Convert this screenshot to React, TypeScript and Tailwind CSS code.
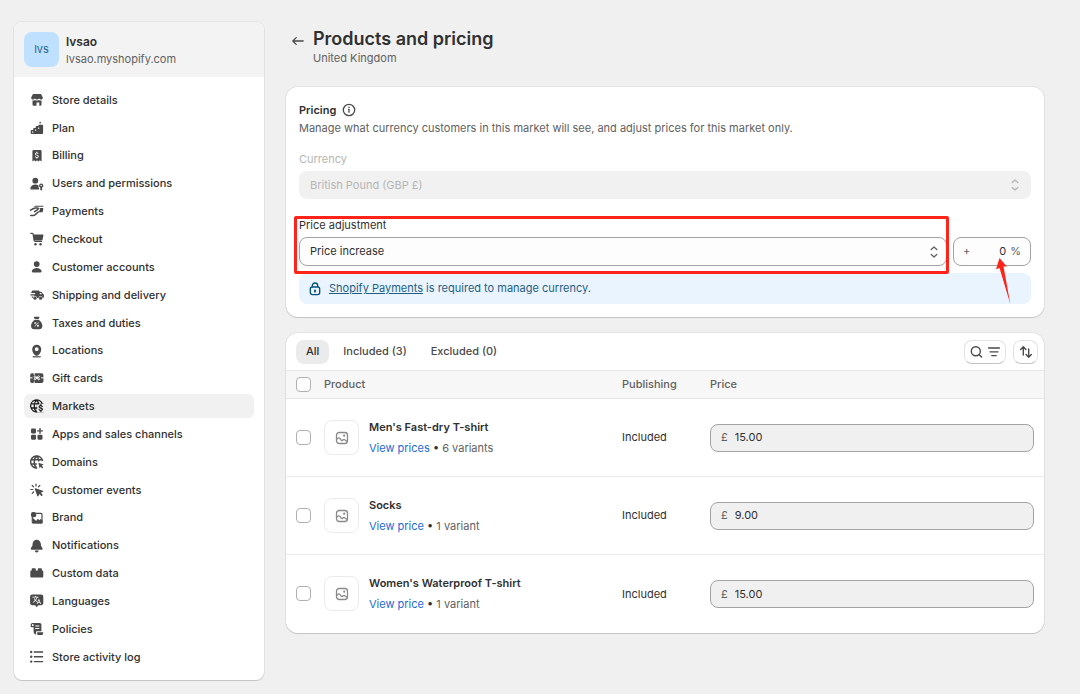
import { useState, type ReactNode } from "react";
import clsx from "clsx";
import { MdAttachMoney, MdPercent, MdTranslate } from "react-icons/md";

interface NavItem {
  label: string;
  icon: ReactNode;
}

interface Product {
  name: string;
  link: string;
  variants: string;
  price: string;
}

function Glyph({ children, className }: { children: ReactNode; className?: string }) {
  return (
    <svg
      viewBox="0 0 14 14"
      fill="currentColor"
      aria-hidden="true"
      className={clsx("size-3.5 shrink-0", className)}
    >
      {children}
    </svg>
  );
}

const navItems: NavItem[] = [
  {
    label: "Store details",
    icon: (
      <Glyph>
        <path d="M3 1h8l1.8 3.4c.1 1.3-.7 2.1-1.7 2.1-.9 0-1.5-.4-2-1-.5.6-1.2 1-2.1 1s-1.6-.4-2.1-1c-.5.6-1.1 1-2 1-1 0-1.8-.8-1.7-2.1z" />
        <path d="M2.5 7.6c1 .1 1.8-.1 2.5-.6.6.4 1.2.6 2 .6s1.4-.2 2-.6c.7.5 1.500.7 2.500.6v3.900a1.300 1.300 0 0 1-1.300 1.300H9.300V9.500H6.500v3.300H3.800a1.300 1.300 0 0 1-1.300-1.300z" />
      </Glyph>
    ),
  },
  {
    label: "Plan",
    icon: (
      <Glyph>
        <path d="M9.3 3.8h2.900a.9.9 0 0 1 .9.9v7.400a.9.9 0 0 1-.9.9H1.600a.9.9 0 0 1-.9-.9V9.800a.9.9 0 0 1 .9-.9h1.600V7.800a.9.9 0 0 1 .9-.9h1.600V6a.9.9 0 0 1 .9-.9h1.800v-.4a.9.9 0 0 1 .9-.9z" />
        <path d="M9.800.4l.6.7.9.1-.6.7-.2.9-.7-.5-.7-.1.4-.8z" />
        <path d="M2 10.400h1.200v1.400H2zM5 8.400h1.100v1.300H5zM8.200 6.600h1v1.300h-1z" fill="#fff" />
      </Glyph>
    ),
  },
  {
    label: "Billing",
    icon: (
      <Glyph>
        <path d="M3.800 1h6.400a1.400 1.400 0 0 1 1.400 1.400v10.200l-1.800-1.300-1.400 1.300L7 11.300l-1.400 1.300-1.400-1.300-1.800 1.300V2.400A1.400 1.400 0 0 1 3.800 1z" />
        <MdAttachMoney x="2.500" y="1.700" size={9} color="#fff" />
      </Glyph>
    ),
  },
  {
    label: "Users and permissions",
    icon: (
      <Glyph>
        <circle cx="5.3" cy="3.7" r="2.9" />
        <path d="M5.300 7.600c1.400 0 2.500.4 3.300 1-.3 1.200-.1 2.200.5 3v1H1.500C.5 12.600 0 11.600.5 10.700 1.400 8.800 3.100 7.600 5.300 7.600z" />
        <path
          fillRule="evenodd"
          d="M11.200 6.400a2.200 2.200 0 0 1 .9 4.200v2.200l-.9.9-.9-.9v-2.200a2.200 2.200 0 0 1 .9-4.200zm0 1.300a.8.8 0 1 0 0 1.600.8.8 0 0 0 0-1.600z"
        />
      </Glyph>
    ),
  },
  {
    label: "Payments",
    icon: (
      <Glyph>
        <path d="M5.500 1.800h7.200c.5 0 .8.4.7.9H3.900c.4-.5 1-.9 1.600-.9zM9 4.100h4.300l-.3 2.800c-.1.800-.7 1.300-1.500 1.300H7.600l1.700-1.400c1.100-.9.9-2-.3-2.700z" />
        <path
          d="M.6 6.200l3-1.700c.6-.3 1.100-.4 1.800-.4h2c1 0 1.100 1 .3 1.500L4.600 7.700M.7 11.400h2.600c.6 0 1.100-.2 1.600-.6L8 8.200"
          fill="none"
          stroke="currentColor"
          strokeWidth="1.5"
          strokeLinecap="round"
        />
      </Glyph>
    ),
  },
  {
    label: "Checkout",
    icon: (
      <Glyph>
        <path
          d="M.8 1.300h1.400c.5 0 .8.3.9.8l1 6.400c.1.6.5.9 1.100.9h6.200"
          fill="none"
          stroke="currentColor"
          strokeWidth="1.2"
          strokeLinecap="round"
        />
        <path d="M3.200 2.500h9.400c.6 0 .9.4.8.9l-.8 4.100c-.1.6-.5.9-1.100.9H4.100z" />
        <circle cx="5.5" cy="12.200" r="1.2" />
        <circle cx="10.5" cy="12.200" r="1.2" />
      </Glyph>
    ),
  },
  {
    label: "Customer accounts",
    icon: (
      <Glyph>
        <circle cx="6.7" cy="4.1" r="2.9" />
        <path d="M6.700 8c2.200 0 3.900 1 4.700 2.500.5 1 0 2-1.100 2H3.100c-1.100 0-1.600-1-1.100-2C2.800 9 4.500 8 6.700 8z" />
      </Glyph>
    ),
  },
  {
    label: "Shipping and delivery",
    icon: (
      <Glyph>
        <path
          fillRule="evenodd"
          d="M2.800 2.500h5.400c.8 0 1.400.5 1.500 1.300h1c.6 0 1.100.3 1.400.8l.5 1 .7.4c.4.2.6.6.6 1v1.700c0 .8-.5 1.300-1.300 1.300a2 2 0 0 0-4 0H7a2 2 0 0 0-4 0c-.8 0-1.400-.6-1.400-1.400h2.800V7.400H.7C.2 7.400.2 6.300.7 6.300h4.400V5.100H1.500C1 5.100 1 4 1.500 4h.2c0-.9.4-1.500 1.100-1.500zM9.800 5v1.300h1.900L11.200 5z"
        />
        <circle cx="5" cy="10.200" r="1.6" />
        <circle cx="10.600" cy="10.200" r="1.6" />
      </Glyph>
    ),
  },
  {
    label: "Taxes and duties",
    icon: (
      <Glyph>
        <path d="M4.600.7h4.200c.6 0 .8.5.5 1L8.700 3h-4l-.6-1.300c-.3-.5-.1-1 .5-1zM4.700 3.700h4c2.100 1.200 3.700 3.800 3.700 6.300 0 2-1.300 3.300-3.300 3.300H4.300c-2 0-3.300-1.300-3.300-3.300 0-2.500 1.600-5.100 3.700-6.300z" />
        <MdPercent x="3.200" y="5" size={7} color="#fff" />
      </Glyph>
    ),
  },
  {
    label: "Locations",
    icon: (
      <Glyph>
        <path
          fillRule="evenodd"
          d="M6.700.7a4.500 4.500 0 0 1 4.500 4.500c0 2.900-1.600 5-3.400 6.200a2 2 0 0 1-2.200 0C3.800 10.200 2.200 8.100 2.200 5.200A4.500 4.500 0 0 1 6.700.7zm0 2.600a1.900 1.900 0 1 0 0 3.800 1.900 1.900 0 0 0 0-3.800z"
        />
        <path d="M2.700 12.200h8v1.200h-8z" />
      </Glyph>
    ),
  },
  {
    label: "Gift cards",
    icon: (
      <Glyph>
        <rect x=".2" y="2.300" width="13.200" height="9.800" rx="1.800" />
        <path
          d="M0 6.800h2.600M11 6.800h2.600M4.200 2v2M4.200 10.500v2M4.200 5.200c.8-.9 1.900 0 2.600 1.600.7-1.600 1.800-2.500 2.600-1.600.6.8-.5 1.500-2.600 1.600 2.100.1 3.200.9 2.600 1.700-.8.8-1.900 0-2.600-1.700-.7 1.700-1.800 2.500-2.600 1.700-.6-.8.5-1.600 2.600-1.700-2.100-.1-3.200-.8-2.600-1.600z"
          fill="none"
          stroke="#fff"
          strokeWidth="1"
        />
      </Glyph>
    ),
  },
  {
    label: "Markets",
    icon: (
      <Glyph className="text-[#1a1a1a]">
        <path
          d="M7.200 12.900A6 6 0 1 1 12.300 4.800M6.500.9C4.900 2.500 4.200 4.600 4.200 6.900s.7 4.400 2.300 6M6.500.9c1.200 1.100 1.900 2.600 2.200 4.300M.8 4.900h8.500M.8 9h6.500"
          fill="none"
          stroke="currentColor"
          strokeWidth="1.3"
        />
        <MdAttachMoney x="6.200" y="4.300" size={9.5} stroke="currentColor" strokeWidth="1" />
      </Glyph>
    ),
  },
  {
    label: "Apps and sales channels",
    icon: (
      <Glyph>
        <rect x="1" y="1.400" width="5" height="5" rx="1.100" />
        <rect x="1" y="7.700" width="5" height="5" rx="1.100" />
        <rect x="7.500" y="7.700" width="5" height="5" rx="1.100" />
        <path d="M9.300 1h1.400v2.200h2.200v1.400h-2.200v2.200H9.300V4.600H7.100V3.200h2.200z" />
      </Glyph>
    ),
  },
  {
    label: "Domains",
    icon: (
      <Glyph>
        <path
          d="M7.200 12.900A6 6 0 1 1 12.600 6.200M6.500.9C4.900 2.500 4.200 4.600 4.200 6.900s.7 4.400 2.300 6M6.500.9c1.600 1.500 2.300 3.400 2.300 5.500M.8 4.800h11.500M.8 9h6"
          fill="none"
          stroke="currentColor"
          strokeWidth="1.5"
        />
        <path d="M8.300 7.700l5.400 1.900-2 1.100 1.600 1.800-1 1-1.700-1.700-.9 1.700z" />
      </Glyph>
    ),
  },
  {
    label: "Customer events",
    icon: (
      <Glyph>
        <path
          d="M6 1v2M2.200 2.500l1.400 1.400M9.800 2.500L8.400 3.900M.8 6.500h2M2.200 10.400L3.600 9"
          fill="none"
          stroke="currentColor"
          strokeWidth="1.2"
          strokeLinecap="round"
        />
        <path d="M5.500 5.200l7.300 2.500c.6.2.6 1 0 1.200l-2 .9 2 2.200-1.200 1.200-2.200-2.100-.9 2c-.3.6-1 .6-1.200 0L4.800 6c-.2-.5.2-1 .7-.8z" />
      </Glyph>
    ),
  },
  {
    label: "Brand",
    icon: (
      <Glyph>
        <rect x="1" y="1" width="5.200" height="5.200" rx="1.900" />
        <path
          d="M6 2.400h5c.6 0 1 .4 1 1V11c0 .6-.4 1-1 1H3.300c-.6 0-1-.4-1-1V5.500"
          fill="none"
          stroke="currentColor"
          strokeWidth="1.2"
        />
        <path d="M4.800 12.300l2.400-3.900c.3-.5.8-.5 1.200-.1l.9 1 1.100-1c.4-.4.8-.3 1.100.1l1.100 1.700v1.500c0 .6-.4 1-1 1z" />
        <path d="M2.300 6.500L7.500 11l-2 1.300H3z" />
      </Glyph>
    ),
  },
  {
    label: "Notifications",
    icon: (
      <Glyph>
        <path d="M6.700.8c2.400 0 3.900 1.700 4.100 4l.2 2 1.400 2.100c.6.9 0 1.900-1 1.900H2c-1 0-1.600-1-1-1.900l1.400-2.100.2-2c.2-2.300 1.700-4 4.100-4zM4.700 11.600h4a2 2 0 0 1-4 0z" />
      </Glyph>
    ),
  },
  {
    label: "Custom data",
    icon: (
      <Glyph>
        <path d="M2.700 2.300h2.100c.6 0 1 .4 1 1v1.100h2V3.300c0-.6.4-1 1-1h2.100c.6 0 1 .4 1 1v1.100h.2c.7 0 1.200.5 1.200 1.200v4.600c0 .8-.5 1.300-1.300 1.300H1.600C.8 11.500.3 11 .3 10.200V5.600c0-.7.5-1.200 1.200-1.200h.2V3.300c0-.6.4-1 1-1z" />
      </Glyph>
    ),
  },
  {
    label: "Languages",
    icon: (
      <Glyph>
        <path d="M2.300.6h8.800c1.300 0 2.200.9 2.200 2.200v6.300c0 1.300-.9 2.200-2.200 2.200H8.300l-1.600 1.900-1.600-1.900H2.300C1 11.300.1 10.400.1 9.100V2.800C.1 1.500 1 .6 2.300.6z" />
        <MdTranslate x="1.900" y="1.200" size={9.5} color="#fff" />
      </Glyph>
    ),
  },
  {
    label: "Policies",
    icon: (
      <Glyph>
        <path
          fillRule="evenodd"
          d="M2.600.9h7c1.100 0 1.800.7 1.800 1.800v6.500H7.300c-1 0-1.600.7-1.400 1.600l.4 1.600c-1.600 0-2.700-1-2.700-2.600V5.300H1.800C1.100 5.300.7 4.900.7 4.200V2.800C.7 1.700 1.500.9 2.600.9zM2 2.700V4h1.600V2.700c0-1-1.600-1-1.600 0zM5.300 3.400v1h4v-1zM5.300 6v1h4V6z"
        />
        <path d="M7.200 10.300h5.400c.6 0 .8.4.6 1l-.2.6c-.3.8-.8 1.200-1.600 1.200H8.500c-.8 0-1.200-.4-1.300-1.200z" />
      </Glyph>
    ),
  },
  {
    label: "Store activity log",
    icon: (
      <Glyph>
        <circle cx="1.2" cy="2" r="1.2" />
        <circle cx="1.2" cy="6.800" r="1.2" />
        <circle cx="1.2" cy="11.600" r="1.2" />
        <path d="M3.800 1.300h9.300v1.400H3.800zM3.800 6.100h9.300v1.400H3.800zM3.800 10.900h9.300v1.400H3.800z" />
      </Glyph>
    ),
  },
];

const products: Product[] = [
  { name: "Men's Fast-dry T-shirt", link: "View prices", variants: "6 variants", price: "15.00" },
  { name: "Socks", link: "View price", variants: "1 variant", price: "9.00" },
  { name: "Women's Waterproof T-shirt", link: "View price", variants: "1 variant", price: "15.00" },
];

const tabs = ["All", "Included (3)", "Excluded (0)"];

function Card({ children, className }: { children: ReactNode; className?: string }) {
  return (
    <section
      className={clsx(
        "rounded-xl bg-white shadow-[0_1px_1px_rgba(0,0,0,0.14),0_0_0_1px_rgba(0,0,0,0.05)]",
        className
      )}
    >
      {children}
    </section>
  );
}

function SelectChevrons({ className }: { className?: string }) {
  return (
    <svg
      viewBox="0 0 10 14"
      fill="none"
      stroke="currentColor"
      strokeWidth="1.3"
      strokeLinecap="round"
      strokeLinejoin="round"
      aria-hidden="true"
      className={clsx("pointer-events-none absolute top-1/2 h-3.5 w-2.5 -translate-y-1/2", className)}
    >
      <path d="M2.200 4.500L5 2l2.800 2.500M2.200 9.500L5 12l2.800-2.500" />
    </svg>
  );
}

function Checkbox({ label }: { label: string }) {
  return (
    <input
      type="checkbox"
      aria-label={label}
      className="block size-[15px] appearance-none rounded border border-[#b0b0b0] bg-white checked:bg-[#303030]"
    />
  );
}

function Sidebar() {
  return (
    <aside className="flex w-[250px] shrink-0 flex-col overflow-hidden rounded-lg bg-white shadow-[0_1px_1px_rgba(0,0,0,0.14),0_0_0_1px_rgba(0,0,0,0.05)]">
      <div className="flex items-center gap-[7px] bg-[#f3f3f3] px-2.5 py-2.5">
        <div className="flex size-[35px] items-center justify-center rounded-lg bg-[#bfe0ff] text-[#1f6391]">
          lvs
        </div>
        <div>
          <p className="text-[12px] leading-[18px] font-semibold">lvsao</p>
          <p className="leading-4 text-[#616161]">lvsao.myshopify.com</p>
        </div>
      </div>
      <nav className="flex flex-1 flex-col justify-between px-2.5 py-[11px]">
        {navItems.map((item) => (
          <a
            key={item.label}
            href="#"
            className={clsx(
              "flex h-6 items-center gap-2 rounded-md px-1.5 font-medium",
              item.label === "Markets" && "bg-[#f1f1f1]"
            )}
          >
            <span className="text-[#4a4a4a]">{item.icon}</span>
            {item.label}
          </a>
        ))}
      </nav>
    </aside>
  );
}

function PricingCard() {
  return (
    <Card className="p-[13px]">
      <div className="flex items-center gap-1.5 pt-0.5">
        <h2 className="leading-4 font-semibold">Pricing</h2>
        <svg viewBox="0 0 14 14" fill="none" stroke="#4a4a4a" strokeWidth="1.3" aria-hidden="true" className="size-3.5">
          <circle cx="7" cy="7" r="5.700" />
          <path d="M6.100 6.400H7v3.400" />
          <circle cx="7" cy="4.300" r=".8" fill="#4a4a4a" stroke="none" />
        </svg>
      </div>
      <p className="mt-0.5 leading-4 text-[#616161]">
        Manage what currency customers in this market will see, and adjust prices for this market only.
      </p>

      <label htmlFor="currency" className="mt-[15px] block leading-4 text-[#b5b5b5]">
        Currency
      </label>
      <div className="relative mt-1 text-[#b5b5b5]">
        <select
          id="currency"
          disabled
          className="h-7 w-full appearance-none rounded-lg bg-[#f1f1f1] px-[11px] opacity-100"
        >
          <option>British Pound (GBP £)</option>
        </select>
        <SelectChevrons className="right-[11px]" />
      </div>

      <div className="mt-[18px] flex items-end gap-1.5">
        <div className="relative flex-1">
          <label htmlFor="adjustment" className="block leading-4">
            Price adjustment
          </label>
          <div className="relative mt-1">
            <select
              id="adjustment"
              className="block h-[29px] w-full appearance-none rounded-lg border border-[#a3a3a3] bg-[#fdfdfd] px-2.5"
            >
              <option>Price increase</option>
              <option>Price decrease</option>
            </select>
            <SelectChevrons className="right-2 text-[#616161]" />
          </div>
          {/* Highlight box */}
          <div className="pointer-events-none absolute -top-px -right-0.5 -bottom-2 -left-[5px] rounded-xs border-3 border-[#fe2419]" />
        </div>
        <div className="relative flex h-[29px] w-[78px] items-center rounded-lg border border-[#a3a3a3] bg-[#fdfdfd] px-[9px] text-[#616161]">
          <span>+</span>
          <input
            aria-label="Percentage"
            defaultValue="0"
            className="w-0 min-w-0 flex-1 bg-transparent text-right text-[#303030]"
          />
          <span className="ml-1">%</span>
          {/* Pointer arrow */}
          <svg
            viewBox="0 0 16 46"
            fill="#fe2419"
            aria-hidden="true"
            className="pointer-events-none absolute top-5 left-[41px] h-[46px] w-4"
          >
            <path d="M4.500 0L12 8.700 8.500 8.200 15.300 46 4.500 10 1 11.200z" />
          </svg>
        </div>
      </div>

      <div className="mt-[7px] flex h-[31px] items-center gap-[7px] rounded-lg bg-[#eaf4ff] px-[9px] text-[#1f5f85]">
        <svg viewBox="0 0 14 14" fill="none" stroke="#00527c" strokeWidth="1.3" aria-hidden="true" className="size-3.5">
          <path d="M4.300 5V3.700a2.700 2.700 0 0 1 5.400 0V5" />
          <rect x="2.300" y="5" width="9.400" height="7.600" rx="2" />
          <path d="M7 8.300v1.400" strokeWidth="1.8" strokeLinecap="round" />
        </svg>
        <p>
          <a href="#" className="underline">
            Shopify Payments
          </a>{" "}
          is required to manage currency.
        </p>
      </div>
    </Card>
  );
}

function ProductsCard() {
  const [tab, setTab] = useState("All");

  return (
    <Card className="mt-4 overflow-hidden">
      <div className="flex h-[37px] items-center justify-between pr-1.5 pl-2.5">
        <div className="flex gap-1">
          {tabs.map((name) => (
            <button
              key={name}
              type="button"
              onClick={() => setTab(name)}
              className={clsx(
                "h-6 rounded-lg px-2.5 font-medium",
                tab === name ? "bg-[#ebebeb] text-[#303030]" : "text-[#4a4a4a]"
              )}
            >
              {name}
            </button>
          ))}
        </div>
        <div className="flex gap-[7px] text-[#4a4a4a]">
          <button
            type="button"
            aria-label="Search and filter"
            className="flex h-6 items-center gap-1 rounded-lg border border-[#e3e3e3] border-b-[#c4c4c4] px-1"
          >
            <svg viewBox="0 0 14 14" fill="none" stroke="currentColor" strokeWidth="1.4" strokeLinecap="round" className="size-3.5">
              <circle cx="6.800" cy="6.300" r="4.500" />
              <path d="M10.200 9.700l2.400 2.400" />
            </svg>
            <svg viewBox="0 0 14 14" fill="none" stroke="currentColor" strokeWidth="1.3" strokeLinecap="round" className="size-3.5">
              <path d="M1.500 3h11M3 6.800h8M4.800 10.700h4.400" />
            </svg>
          </button>
          <button
            type="button"
            aria-label="Sort"
            className="flex h-6 w-[25px] items-center justify-center rounded-lg border border-[#e3e3e3] border-b-[#c4c4c4]"
          >
            <svg viewBox="0 0 14 14" fill="none" stroke="currentColor" strokeWidth="1.4" strokeLinecap="round" strokeLinejoin="round" className="size-3.5 shrink-0">
              <path d="M4.300 10V1.800M1.700 4.400l2.600-2.600 2.600 2.600M9.700 4v8.200M7.100 9.600l2.600 2.600 2.600-2.600" />
            </svg>
          </button>
        </div>
      </div>

      <table className="w-full table-fixed border-collapse text-left">
        <colgroup>
          <col className="w-[38px]" />
          <col />
          <col className="w-[88px]" />
          <col className="w-[334px]" />
        </colgroup>
        <thead>
          <tr className="h-7 border-y border-[#e6e6e6] bg-[#f7f7f7] text-[#616161]">
            <th className="pl-2.5">
              <Checkbox label="Select all products" />
            </th>
            <th className="font-medium">Product</th>
            <th className="font-medium">Publishing</th>
            <th className="font-medium">Price</th>
          </tr>
        </thead>
        <tbody>
          {products.map((product) => (
            <tr key={product.name} className="h-[78px] border-b border-[#ebebeb] last:border-b-0">
              <td className="pl-2.5">
                <Checkbox label={`Select ${product.name}`} />
              </td>
              <td>
                <div className="flex items-center gap-2.5">
                  <div className="flex size-[35px] items-center justify-center rounded-lg border border-[#ebebeb] text-[#8a8a8a]">
                    <svg viewBox="0 0 14 14" fill="none" stroke="currentColor" strokeWidth="1.3" className="size-3.5">
                      <rect x="1.500" y="1.500" width="11" height="11" rx="2.700" />
                      <path d="M1.700 8.200l1.500-1.100c.5-.4 1.100-.3 1.500.1l1.500 1.900c.4.5 1 .5 1.500.1l.5-.4c.5-.4 1-.4 1.500 0l2.500 1.700" />
                      <circle cx="9.200" cy="4.700" r="1.100" fill="currentColor" stroke="none" />
                    </svg>
                  </div>
                  <div>
                    <p className="leading-4 font-semibold">{product.name}</p>
                    <p className="mt-[5px] leading-4 text-[#616161]">
                      <a href="#" className="text-[#1a6bd8]">
                        {product.link}
                      </a>{" "}
                      <span className="text-[#303030]">•</span> {product.variants}
                    </p>
                  </div>
                </div>
              </td>
              <td>Included</td>
              <td className="pr-2.5">
                <div className="flex h-7 items-center gap-[7px] rounded-lg border border-[#a3a3a3] bg-[#f0f0f0] px-2.5">
                  <span className="text-[#616161]">£</span>
                  <input
                    aria-label={`Price of ${product.name}`}
                    defaultValue={product.price}
                    className="w-0 min-w-0 flex-1 bg-transparent"
                  />
                </div>
              </td>
            </tr>
          ))}
        </tbody>
      </table>
    </Card>
  );
}

export default function App() {
  return (
    <div className="flex min-h-screen gap-[22px] bg-[#f0f0f0] pt-[22px] pr-9 pb-3.5 pl-3.5 font-['Inter',sans-serif] text-[11px] text-[#303030]">
      <Sidebar />
      <main className="min-w-0 flex-1">
        <header className="mb-[21px] flex gap-[7px] pt-1.5 pl-1">
          <button type="button" aria-label="Back" className="mt-[5px] flex size-4 items-center justify-center text-[#4a4a4a]">
            <svg viewBox="0 0 14 14" fill="none" stroke="currentColor" strokeWidth="1.3" strokeLinecap="round" strokeLinejoin="round" className="size-3.5">
              <path d="M12.200 7H1.800M5.200 3.600L1.800 7l3.400 3.400" />
            </svg>
          </button>
          <div>
            <h1 className="text-[18px] leading-[22px] font-semibold">Products and pricing</h1>
            <p className="leading-4 text-[#616161]">United Kingdom</p>
          </div>
        </header>
        <PricingCard />
        <ProductsCard />
      </main>
    </div>
  );
}
